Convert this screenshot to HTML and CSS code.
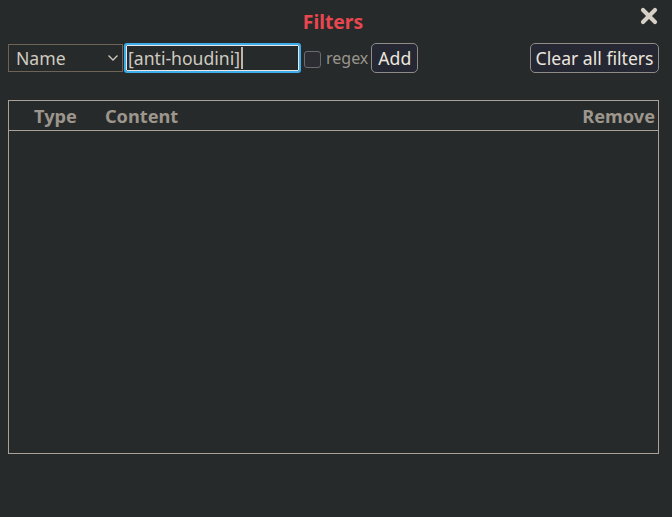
FILE: index.html
```html
<!DOCTYPE html>
<html>
<head>
<meta charset="utf-8">
<link rel="stylesheet" href="styles.css">
</head>
<body>
<div class="dialog">
  <div class="header">
    <h1 class="title">Filters</h1>
    <button class="close" aria-label="Close">
      <svg width="18" height="18" viewBox="0 0 18 18"><path d="M3 3 L15 15 M15 3 L3 15" stroke="#d6d0c6" stroke-width="4.2" stroke-linecap="round"/></svg>
    </button>
  </div>
  <div class="controls">
    <div class="left">
      <div class="select">
        <span>Name</span>
        <svg width="12" height="8" viewBox="0 0 12 8"><path d="M1.5 1.5 L6 6 L10.5 1.5" fill="none" stroke="#cfc9bf" stroke-width="1.3"/></svg>
      </div>
      <div class="input"><span>[anti-houdini]</span><span class="caret"></span></div>
      <span class="check"></span>
      <span class="regex">regex</span>
      <button class="btn add">Add</button>
    </div>
    <button class="btn clear">Clear all filters</button>
  </div>
  <div class="table">
    <div class="thead">
      <span class="th type">Type</span>
      <span class="th content">Content</span>
      <span class="th remove">Remove</span>
    </div>
  </div>
</div>
</body>
</html>
```

FILE: styles.css
```css
html, body {
  margin: 0;
  padding: 0;
  background: #262a2b;
  height: 100%;
}
body {
  font-family: "Noto Sans", "Open Sans", sans-serif;
  color: #d6d0c6;
}
.dialog {
  padding: 0 8px;
}
.header {
  position: relative;
  height: 43px;
  display: flex;
  justify-content: center;
  padding-right: 6px;
}
.title {
  margin: 0;
  font-size: 19.3px;
  font-weight: 700;
  color: #e9474f;
  line-height: 44px;
}
.close {
  position: absolute;
  right: 5px;
  top: 7px;
  background: none;
  border: 0;
  padding: 0;
  width: 20px;
  height: 20px;
}
.controls {
  display: flex;
  justify-content: space-between;
  align-items: center;
  height: 30px;
}
.left {
  display: flex;
  align-items: center;
}
.select {
  box-sizing: border-box;
  width: 115px;
  height: 28px;
  border: 1px solid #6d6356;
  display: flex;
  align-items: center;
  justify-content: space-between;
  padding: 0 3px 0 7px;
  font-size: 17.6px;
  color: #d0cac0;
}
.input {
  box-sizing: border-box;
  margin-left: 1px;
  width: 177px;
  height: 30px;
  border: 2px solid #3daee9;
  outline: 1px solid #e8e8e8;
  outline-offset: -3px;
  border-radius: 3px;
  display: flex;
  align-items: center;
  padding: 0 0 0 2px;
  font-size: 17.6px;
  color: #d0cac0;
}
.caret {
  display: inline-block;
  width: 2px;
  height: 22px;
  background: #bdb6ac;
  margin-left: 1px;
}
.check {
  box-sizing: border-box;
  width: 17px;
  height: 17px;
  margin-left: 3px;
  margin-top: 3px;
  border: 1px solid #6a6a72;
  border-radius: 3px;
  background: #2b2d33;
}
.regex {
  margin-left: 5px;
  font-size: 16px;
  color: #9a958d;
}
.btn {
  box-sizing: border-box;
  height: 30px;
  border: 1px solid #8e8b89;
  border-radius: 5px;
  background: #252832;
  color: #ebe6de;
  font-family: "Noto Sans", "Open Sans", sans-serif;
  font-size: 17.6px;
  padding: 0 6px;
}
.add {
  margin-left: 3px;
}
.clear {
  margin-right: 5px;
  padding: 0 4.5px;
}
.table {
  box-sizing: border-box;
  margin-top: 27px;
  width: 651px;
  height: 354px;
  border: 1px solid #aaa298;
}
.thead {
  display: flex;
  align-items: center;
  height: 29px;
  border-bottom: 1px solid #aaa298;
  font-size: 18.2px;
  font-weight: 700;
  color: #9d968c;
}
.th.type { margin-left: 25px; }
.th.content { margin-left: 28px; }
.th.remove { margin-left: auto; margin-right: 3px; }
```
